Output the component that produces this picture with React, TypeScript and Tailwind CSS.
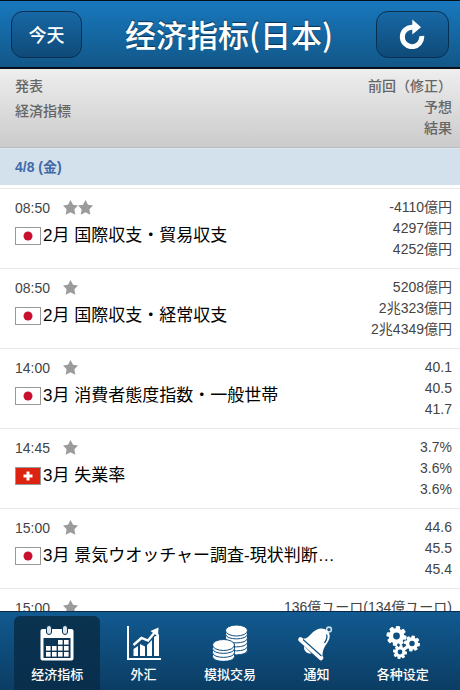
import type { ReactNode } from 'react';
import clsx from 'clsx';

type Country = 'jp' | 'ch' | 'eu';

interface Indicator {
  id: number;
  time: string;
  stars: number;
  country: Country;
  title: string;
  values: string[];
}

const indicators: Indicator[] = [
  { id: 1, time: '08:50', stars: 2, country: 'jp', title: '2月 国際収支・貿易収支', values: ['-4110億円', '4297億円', '4252億円'] },
  { id: 2, time: '08:50', stars: 1, country: 'jp', title: '2月 国際収支・経常収支', values: ['5208億円', '2兆323億円', '2兆4349億円'] },
  { id: 3, time: '14:00', stars: 1, country: 'jp', title: '3月 消費者態度指数・一般世帯', values: ['40.1', '40.5', '41.7'] },
  { id: 4, time: '14:45', stars: 1, country: 'ch', title: '3月 失業率', values: ['3.7%', '3.6%', '3.6%'] },
  { id: 5, time: '15:00', stars: 1, country: 'jp', title: '3月 景気ウオッチャー調査-現状判断…', values: ['44.6', '45.5', '45.4'] },
  { id: 6, time: '15:00', stars: 1, country: 'eu', title: '', values: ['136億ユーロ(134億ユーロ)'] },
];

function Star() {
  return (
    <svg viewBox="0 0 24 24" className="h-[15px] w-[15px]" fill="#9b9b9b">
      <path d="M12 0l4 7.6 8 1.2-5.8 6 1.5 8.7L12 19.6l-7.7 3.9 1.5-8.7L0 8.8l8-1.2z" />
    </svg>
  );
}

function Flag({ country }: { country: Country }) {
  if (country === 'eu') return null;
  return (
    <svg viewBox="0 0 26 18" className="h-[18px] w-[26px] shrink-0">
      <rect x="0.5" y="0.5" width="25" height="17" fill={country === 'jp' ? '#fff' : '#dd2211'} stroke="#999" />
      {country === 'jp' ? (
        <circle cx="13" cy="9" r="4.5" fill="#c8102e" />
      ) : (
        <path d="M11.5 4.5h3v3h3v3h-3v3h-3v-3h-3v-3h3z" fill="#fff" />
      )}
    </svg>
  );
}

function RefreshIcon() {
  return (
    <svg viewBox="0 0 26 30" className="h-[30px] w-[26px]">
      <path d="M14 8.3A9.7 9.7 0 1 0 22.7 17" fill="none" stroke="#fff" strokeWidth="5" />
      <path d="M13.3 0.5L22 8.2L13.3 15.5z" fill="#fff" />
    </svg>
  );
}

function CalendarIcon() {
  const cells = [
    [19, 15], [25, 15],
    [7, 21], [13, 21], [19, 21], [25, 21],
    [7, 27], [13, 27], [19, 27], [25, 27],
  ];
  return (
    <svg viewBox="0 0 36 36" className="size-9">
      <rect x="1.5" y="4" width="33" height="31.5" rx="2" fill="#fff" />
      <rect x="4.5" y="13" width="27" height="20" fill="#0b3555" />
      {cells.map(([x, y]) => (
        <rect key={`${x}-${y}`} x={x} y={y} width="4.6" height="4.6" fill="#fff" />
      ))}
      <rect x="7.5" y="0.5" width="5" height="9" rx="2.5" fill="#dbe6ee" stroke="#0b3555" />
      <rect x="23.5" y="0.5" width="5" height="9" rx="2.5" fill="#dbe6ee" stroke="#0b3555" />
    </svg>
  );
}

function ChartIcon() {
  return (
    <svg viewBox="0 0 36 36" className="size-9" fill="#fff">
      <path d="M1 1h2v32h32v2H1z" />
      <path d="M7.5 24l4.5-3v10H7.5zM14 19l5 2.5V31h-5zM21 20l5-5v16h-5zM28 12l5-3v22h-5z" />
      <path d="M7.5 20l8-7 6.500 2.500L29 7" fill="none" stroke="#fff" strokeWidth="2.4" />
      <path d="M24.5 6L32.500 2.500l-.5 9z" />
    </svg>
  );
}

function Coins({ x, y, count }: { x: number; y: number; count: number }) {
  const layers = Array.from({ length: count }, (_, i) => count - 1 - i);
  return (
    <g transform={`translate(${x} ${y})`} fill="#fff" stroke="#0d4f80" strokeWidth="1">
      {layers.map((i) => (
        <path key={i} d={`M0 ${5 + i * 4}v4c0 6.5 22 6.5 22 0v-4z`} />
      ))}
      <ellipse cx="11" cy="5.5" rx="11" ry="5.5" />
    </g>
  );
}

function CoinsIcon() {
  return (
    <svg viewBox="0 0 36 36" className="size-9">
      <Coins x={13.5} y={0} count={5} />
      <Coins x={0.5} y={14.5} count={3} />
    </svg>
  );
}

function BellIcon() {
  return (
    <svg viewBox="0 0 36 36" className="size-9">
      <circle cx="31" cy="4.5" r="2.4" fill="none" stroke="#c8dbe8" strokeWidth="1.6" />
      <path
        d="M3.5 13.5C9 14.500 11 11 14.500 7.500C18.500 3.500 25 1.500 29.500 6C33.500 10 31.500 15 28.500 19C25.500 23.500 24.500 26 24.500 32z"
        fill="#fff"
      />
      <path d="M2.500 14.500L23 33" stroke="#fff" strokeWidth="4.500" strokeLinecap="round" />
      <path d="M5 14.500L23.500 31" stroke="#0d4f80" strokeWidth="1.100" />
      <path d="M6 21c-.5 5 3 8 7.500 7.500z" fill="#fff" />
      <path d="M28.500 9.500c1.500 3 0 5.500-2 8.500" fill="none" stroke="#0d4f80" strokeWidth="1.300" />
    </svg>
  );
}

function Gear({ x, y, size }: { x: number; y: number; size: number }) {
  return (
    <g transform={`translate(${x} ${y}) scale(${size / 10})`} fill="#fff">
      {[0, 45, 90, 135].map((angle) => (
        <rect key={angle} x="-2.2" y="-10" width="4.4" height="20" rx="1" transform={`rotate(${angle + 10})`} />
      ))}
      <circle r="7.8" />
      <circle r="3.4" fill="#0d4f80" />
    </g>
  );
}

function GearsIcon() {
  return (
    <svg viewBox="0 0 36 36" className="size-9">
      <Gear x={11.5} y={11} size={10} />
      <Gear x={27} y={18.5} size={8} />
      <Gear x={15} y={27} size={7} />
    </svg>
  );
}

const tabs: { label: string; icon: ReactNode }[] = [
  { label: '经济指标', icon: <CalendarIcon /> },
  { label: '外汇', icon: <ChartIcon /> },
  { label: '模拟交易', icon: <CoinsIcon /> },
  { label: '通知', icon: <BellIcon /> },
  { label: '各种设定', icon: <GearsIcon /> },
];

const headerButton =
  'flex h-[47px] items-center justify-center rounded-xl border border-[#062f50] bg-linear-to-b from-[#1768a6] to-[#0f4a78] text-white';

function IndicatorRow({ item }: { item: Indicator }) {
  return (
    <li className="flex justify-between border-t border-[#e6e8ea] py-2 pr-2 pl-[15px]">
      <div className="min-w-0">
        <div className="flex h-[21px] items-center">
          <time className="w-12 text-sm text-[#444]">{item.time}</time>
          <span className="flex" role="img" aria-label={`重要度 ${item.stars}`}>
            {Array.from({ length: item.stars }, (_, i) => (
              <Star key={i} />
            ))}
          </span>
        </div>
        <div className="mt-1 flex h-7 items-center gap-0.5">
          <Flag country={item.country} />
          <h2 className="text-[17px] whitespace-nowrap text-black">{item.title}</h2>
        </div>
      </div>
      <div className="shrink-0 text-right text-sm text-[#444]">
        {item.values.map((value, i) => (
          <p key={i} className="leading-[21px]">{value}</p>
        ))}
      </div>
    </li>
  );
}

export default function App() {
  return (
    <div
      lang="ja"
      className="flex h-screen flex-col overflow-hidden bg-white font-['Liberation_Sans','Noto_Sans_CJK_JP',sans-serif]"
    >
      <header
        lang="zh-CN"
        className="flex h-[69px] shrink-0 items-center justify-between border-t border-b-2 border-[#06101a] bg-linear-to-b from-[#1878be] to-[#125788] px-[11px] font-['Noto_Sans_CJK_SC',sans-serif]"
      >
        <button type="button" className={clsx(headerButton, 'w-[71px] text-lg font-medium')}>
          今天
        </button>
        <h1 className="text-[31px] leading-10 font-medium text-white [text-shadow:0_-1px_1px_#0a3558]">经济指标(日本)</h1>
        <button type="button" aria-label="刷新" className={clsx(headerButton, 'w-[73px]')}>
          <RefreshIcon />
        </button>
      </header>

      <div className="flex h-[79px] shrink-0 justify-between border-b border-[#bbb] bg-linear-to-b from-[#eee] to-[#cbcbcb] pt-[7px] pr-2 pl-[15px] text-sm font-medium text-[#666]">
        <div>
          <p className="leading-[21px]">発表</p>
          <p className="mt-1 leading-[21px]">経済指標</p>
        </div>
        <div className="text-right">
          <p className="leading-[21px]">前回（修正）</p>
          <p className="leading-[21px]">予想</p>
          <p className="leading-[21px]">結果</p>
        </div>
      </div>

      <main className="min-h-0 flex-1 overflow-hidden">
        <h2 className="mb-[3px] h-[37px] border-t border-[#dfe7f2] bg-[#d3e1ec] pl-[15px] text-sm leading-[36px] font-bold text-[#4169a8]">
          4/8 (金)
        </h2>
        <ul>
          {indicators.map((item) => (
            <IndicatorRow key={item.id} item={item} />
          ))}
        </ul>
      </main>

      <nav
        lang="zh-CN"
        className="grid h-[79px] shrink-0 grid-cols-5 border-t border-[#082c49] bg-linear-to-b from-[#115a91] to-[#0b3d63] px-[14px] font-['Liberation_Sans','Noto_Sans_CJK_SC',sans-serif]"
      >
        {tabs.map((tab, i) => (
          <button
            key={tab.label}
            type="button"
            aria-current={i === 0 ? 'page' : undefined}
            className={clsx(
              'mt-1 flex flex-col items-center rounded-t-md pt-[9px] text-white',
              i === 0 && 'bg-linear-to-b from-[#0a3350] to-[#082e4c]',
            )}
          >
            {tab.icon}
            <span className="mt-1 text-[13px] leading-5 font-medium">{tab.label}</span>
          </button>
        ))}
      </nav>
    </div>
  );
}
